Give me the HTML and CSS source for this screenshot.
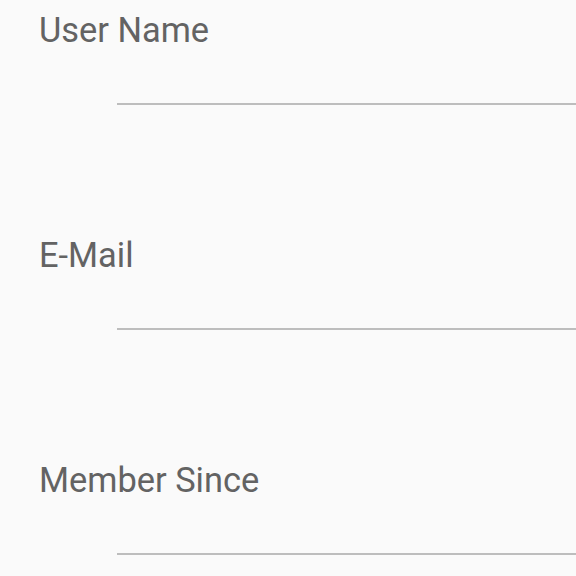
FILE: index.html
```html
<!DOCTYPE html>
<html>
<head>
<meta charset="utf-8">
<link rel="stylesheet" href="styles.css">
</head>
<body>
<div class="form">
  <div class="field">
    <div class="label">User Name</div>
    <div class="input"></div>
  </div>
  <div class="field">
    <div class="label">E-Mail</div>
    <div class="input"></div>
  </div>
  <div class="field">
    <div class="label">Member Since</div>
    <div class="input"></div>
  </div>
</div>
</body>
</html>
```
FILE: styles.css
```css
html, body {
  margin: 0;
  padding: 0;
  background: #fafafa;
}
.form {
  display: flex;
  flex-direction: column;
  gap: 120px;
}
.field {
  display: flex;
  flex-direction: column;
}
.label {
  font-family: Roboto, "Liberation Sans", sans-serif;
  font-size: 34.4px;
  line-height: 40px;
  color: #636363;
  padding: 10px 0 0 39px;
}
.input {
  margin: 53px 0 0 117px;
  height: 2px;
  background: #bdbdbd;
}
```
